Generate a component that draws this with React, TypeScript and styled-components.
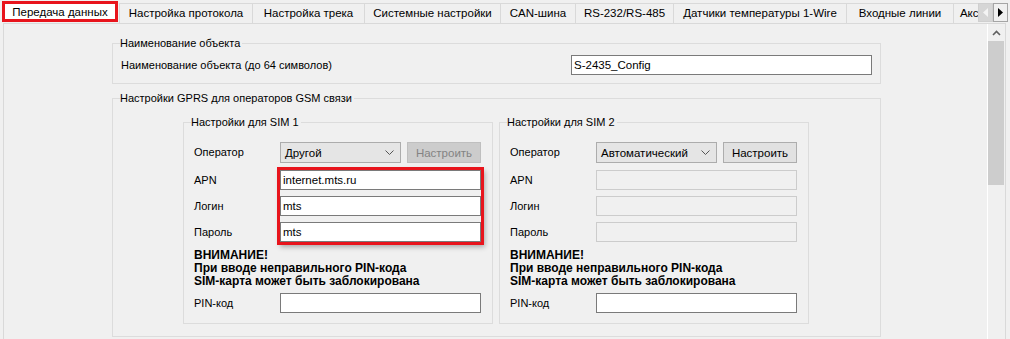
import styled, {createGlobalStyle} from 'styled-components';

const GlobalStyle = createGlobalStyle`
  html, body {
    margin: 0;
    background: #f0f0f0;
    overflow: hidden;
  }
  body {
    font-family: 'Liberation Sans', Arial, sans-serif;
    font-size: 11px;
    color: #000;
  }
`;

const tabs = [
  {title: 'Настройка протокола', w: 133},
  {title: 'Настройка трека', w: 112},
  {title: 'Системные настройки', w: 136},
  {title: 'CAN-шина', w: 75},
  {title: 'RS-232/RS-485', w: 98},
  {title: 'Датчики температуры 1-Wire', w: 173},
  {title: 'Входные линии', w: 107},
  {title: 'Аксессуары', w: 76},
];

interface SimProps {
  title: string;
  operator: string;
  canSetup: boolean;
  apn?: string;
  login?: string;
  password?: string;
  highlight?: boolean;
}

function SimGroup({title, operator, canSetup, apn, login, password, highlight}: SimProps) {
  const filled = apn !== undefined;
  return (
    <SimBox>
      <Legend>{title}</Legend>
      <SimGrid>
        <Label $h={21}>Оператор</Label>
        <Controls>
          <Combo>
            <span>{operator}</span>
            <svg width="9" height="5" viewBox="0 0 9 5">
              <polyline points="0.5,0.5 4.5,4.5 8.5,0.5" fill="none" stroke="#555" strokeWidth="1" />
            </svg>
          </Combo>
          <Button $disabled={!canSetup}>Настроить</Button>
        </Controls>
        <Label>APN</Label>
        <Highlight $on={!!highlight}>
          <TextBox readOnly disabled={!filled} defaultValue={apn ?? ''} />
          <TextBox readOnly disabled={!filled} defaultValue={login ?? ''} />
          <TextBox readOnly disabled={!filled} defaultValue={password ?? ''} />
        </Highlight>
        <Label>Логин</Label>
        <Label>Пароль</Label>
        <Warning>
          ВНИМАНИЕ!
          <br />
          При вводе неправильного PIN-кода
          <br />
          SIM-карта может быть заблокирована
        </Warning>
        <Label>PIN-код</Label>
        <TextBox readOnly defaultValue="" />
      </SimGrid>
    </SimBox>
  );
}

export default function App() {
  return (
    <Window>
      <GlobalStyle />
      <TabBar>
        <TabStrip>
          <ActiveTab>Передача данных</ActiveTab>
          {tabs.map((t) => (
            <Tab key={t.title} $w={t.w}>
              {t.title}
            </Tab>
          ))}
        </TabStrip>
        <TabArrows>
          <ArrowBtn $disabled>
            <svg width="5" height="9" viewBox="0 0 5 9">
              <polygon points="5,0 0,4.5 5,9" fill="#f4f4f4" />
            </svg>
          </ArrowBtn>
          <ArrowBtn>
            <svg width="5" height="9" viewBox="0 0 5 9">
              <polygon points="0,0 5,4.5 0,9" fill="#000" />
            </svg>
          </ArrowBtn>
        </TabArrows>
      </TabBar>
      <Pane>
        <Content>
          <Group>
            <Legend>Наименование объекта</Legend>
            <NameRow>
              <Label>Наименование объекта (до 64 символов)</Label>
              <NameInput readOnly defaultValue="S-2435_Config" />
            </NameRow>
          </Group>
          <Group>
            <Legend>Настройки GPRS для операторов GSM связи</Legend>
            <SimRow>
              <SimGroup
                title="Настройки для SIM 1"
                operator="Другой"
                canSetup={false}
                apn="internet.mts.ru"
                login="mts"
                password="mts"
                highlight
              />
              <SimGroup title="Настройки для SIM 2" operator="Автоматический" canSetup />
            </SimRow>
          </Group>
        </Content>
        <VScroll>
          <ScrollUp>
            <svg width="9" height="6" viewBox="0 0 9 6">
              <polyline points="1,5 4.5,1.5 8,5" fill="none" stroke="#606060" strokeWidth="1.6" />
            </svg>
          </ScrollUp>
          <Thumb />
        </VScroll>
      </Pane>
    </Window>
  );
}

const Window = styled.div`
  width: 1010px;
  height: 339px;
  display: flex;
  flex-direction: column;
  overflow: hidden;
`;

const TabBar = styled.div`
  height: 23px;
  display: flex;
  flex: none;
`;

const TabStrip = styled.div`
  width: 978px;
  flex: none;
  overflow: hidden;
  display: flex;
  align-items: flex-end;
  padding-left: 2px;
  box-sizing: border-box;
`;

const Tab = styled.div<{$w: number}>`
  flex: none;
  box-sizing: border-box;
  width: ${(p) => p.$w}px;
  height: 20px;
  border: 1px solid #d9d9d9;
  border-bottom: none;
  border-right: none;
  text-align: center;
  line-height: 19px;
  font-size: 11.5px;
  white-space: nowrap;
  overflow: hidden;
`;

const ActiveTab = styled.div`
  flex: none;
  width: 110px;
  height: 15px;
  margin: 0 4px 4px 3px;
  background: #fff;
  outline: 3px solid #e8141c;
  text-align: center;
  line-height: 15px;
  font-size: 11.5px;
  padding-top: 1px;
  box-sizing: border-box;
  white-space: nowrap;
`;

const TabArrows = styled.div`
  display: flex;
  padding-top: 3px;
  padding-bottom: 1px;
`;

const ArrowBtn = styled.div<{$disabled?: boolean}>`
  width: 15px;
  box-sizing: border-box;
  display: flex;
  align-items: center;
  justify-content: center;
  background: ${(p) => (p.$disabled ? '#d6d6d6' : '#f0f0f0')};
  border: 1px solid ${(p) => (p.$disabled ? '#cfcfcf' : '#a5a5a5')};
`;

const Pane = styled.div`
  flex: 1;
  min-height: 0;
  display: flex;
  margin: 0 4px 0 3px;
  border: 1px solid #d9d9d9;
  border-bottom: none;
`;

const Content = styled.div`
  flex: 1;
  display: flex;
  flex-direction: column;
  gap: 7px;
  padding: 12px 0 0 108px;
`;

const Group = styled.fieldset`
  width: 769px;
  box-sizing: border-box;
  margin: 0;
  padding: 0;
  border: 1px solid #dcdcdc;
  min-width: 0;
`;

const SimBox = styled(Group)`
  width: 310px;
`;

const Legend = styled.legend`
  margin-left: 7px;
  padding: 0 2px 0 0;
  line-height: 14px;
  font-size: 11px;
`;

const NameRow = styled.div`
  display: flex;
  align-items: center;
  padding: 5px 8px 8px 8px;
`;

const Label = styled.div<{$h?: number}>`
  flex: 1;
  grid-column: 1;
  line-height: ${(p) => p.$h ?? 20}px;
  white-space: nowrap;
`;

const TextBox = styled.input`
  box-sizing: border-box;
  width: 100%;
  height: 20px;
  margin: 0;
  padding: 0 2px;
  font: inherit;
  font-size: 11.5px;
  color: #000;
  background: #fff;
  border: 1px solid #7a7a7a;
  outline: none;

  &:disabled {
    background: #f0f0f0;
    border-color: #cccccc;
  }
`;

const NameInput = styled(TextBox)`
  width: 301px;
`;

const SimRow = styled.div`
  display: flex;
  gap: 6px;
  padding: 10px 0 12px 70px;
`;

const SimGrid = styled.div`
  display: grid;
  grid-template-columns: 86px 201px;
  row-gap: 6px;
  padding: 13px 0 10px 10px;
`;

const Controls = styled.div`
  display: flex;
  gap: 6px;
  margin-bottom: 1px;
`;

const Combo = styled.div`
  width: 121px;
  height: 21px;
  box-sizing: border-box;
  display: flex;
  align-items: center;
  justify-content: space-between;
  padding: 0 6px 0 4px;
  font-size: 11.5px;
  background: #e5e5e5;
  border: 1px solid #acacac;
`;

const Button = styled.div<{$disabled?: boolean}>`
  width: 74px;
  height: 21px;
  box-sizing: border-box;
  display: flex;
  align-items: center;
  justify-content: center;
  font-size: 11.5px;
  background: ${(p) => (p.$disabled ? '#cccccc' : '#e1e1e1')};
  border: 1px solid ${(p) => (p.$disabled ? '#bfbfbf' : '#adadad')};
  color: ${(p) => (p.$disabled ? '#838383' : '#000')};
`;

const Highlight = styled.div<{$on: boolean}>`
  grid-column: 2;
  grid-row: span 3;
  display: flex;
  flex-direction: column;
  gap: 6px;
  outline: ${(p) => (p.$on ? '3px solid #e8141c' : 'none')};
  box-shadow: ${(p) => (p.$on ? '2px 3px 5px 2px rgba(0, 0, 0, 0.3)' : 'none')};
`;

const Warning = styled.div`
  grid-column: 1 / -1;
  font-weight: bold;
  font-size: 12px;
  line-height: 13px;
  margin-top: 1px;
  margin-bottom: -1px;
`;

const VScroll = styled.div`
  width: 17px;
  flex: none;
  display: flex;
  flex-direction: column;
  border-left: 1px solid #fff;
  background: #f0f0f0;
`;

const ScrollUp = styled.div`
  height: 17px;
  display: flex;
  align-items: center;
  justify-content: center;
`;

const Thumb = styled.div`
  height: 144px;
  margin-right: 1px;
  background: #cdcdcd;
`;
